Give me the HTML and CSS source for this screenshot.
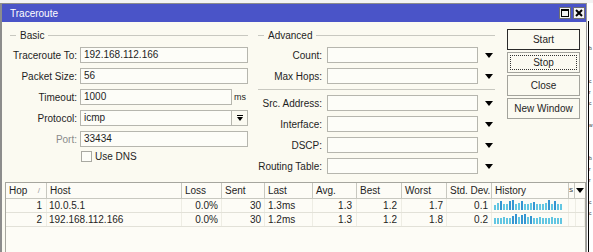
FILE: index.html
```html
<!DOCTYPE html>
<html>
<head>
<meta charset="utf-8">
<link rel="stylesheet" href="styles.css">
</head>
<body>
<div class="screen">
  <div class="topstrip"></div>
  <div class="main">
    <div class="window">
      <div class="titlebar">
        <span class="title">Traceroute</span>
        <div class="tb-btns">
          <svg class="tb-btn" width="12" height="12" viewBox="0 0 12 12"><rect x="0.5" y="0.5" width="11" height="11" fill="#f2f2f2" stroke="#6f6f6f"/><rect x="2.5" y="2.5" width="7" height="7" fill="none" stroke="#000"/><line x1="2" y1="3.5" x2="10" y2="3.5" stroke="#000"/></svg>
          <svg class="tb-btn" width="12" height="12" viewBox="0 0 12 12"><rect x="0.5" y="0.5" width="11" height="11" fill="#f2f2f2" stroke="#6f6f6f"/><path d="M3 3 L9 9 M9 3 L3 9" stroke="#000" stroke-width="2"/></svg>
        </div>
      </div>
      <div class="content">
        <div class="form">
          <div class="group basic">
            <div class="legend"><span>Basic</span></div>
            <div class="row"><span class="lbl">Traceroute To:</span><div class="inp w-full">192.168.112.166</div></div>
            <div class="row"><span class="lbl">Packet Size:</span><div class="inp w-full">56</div></div>
            <div class="row"><span class="lbl">Timeout:</span><div class="inp w-short">1000</div><span class="unit">ms</span></div>
            <div class="row"><span class="lbl">Protocol:</span><div class="inp w-short">icmp</div><div class="ddbtn"><svg width="8" height="8" viewBox="0 0 8 8"><line x1="1" y1="1.5" x2="7" y2="1.5" stroke="#000"/><polygon points="1,3 7,3 4,7" fill="#000"/></svg></div></div>
            <div class="row"><span class="lbl muted">Port:</span><div class="inp w-full">33434</div></div>
            <div class="row check-row"><span class="checkbox"></span><span>Use DNS</span></div>
          </div>
          <div class="group adv">
            <div class="legend"><span>Advanced</span></div>
            <div class="row"><span class="lbl">Count:</span><div class="inp w-adv"></div><span class="arrow"></span></div>
            <div class="row"><span class="lbl">Max Hops:</span><div class="inp w-adv"></div><span class="arrow"></span></div>
            <div class="sep"></div>
            <div class="row"><span class="lbl">Src. Address:</span><div class="inp w-adv"></div><span class="arrow"></span></div>
            <div class="row"><span class="lbl">Interface:</span><div class="inp w-adv"></div><span class="arrow"></span></div>
            <div class="row"><span class="lbl">DSCP:</span><div class="inp w-adv"></div><span class="arrow"></span></div>
            <div class="row"><span class="lbl">Routing Table:</span><div class="inp w-adv"></div><span class="arrow"></span></div>
          </div>
          <div class="buttons">
            <div class="btn default">Start</div>
            <div class="btn focus">Stop</div>
            <div class="btn">Close</div>
            <div class="btn">New Window</div>
          </div>
        </div>
        <div class="table">
          <div class="thead">
            <div class="th hop"><span>Hop</span><span class="sort">/</span></div>
            <div class="th">Host</div>
            <div class="th">Loss</div>
            <div class="th">Sent</div>
            <div class="th">Last</div>
            <div class="th">Avg.</div>
            <div class="th">Best</div>
            <div class="th">Worst</div>
            <div class="th">Std. Dev.</div>
            <div class="th">History</div>
            <div class="th narrow">S</div>
            <div class="th menu"><span class="arrow small"></span></div>
          </div>
          <div class="tr">
            <div class="td num hopn">1</div>
            <div class="td host">10.0.5.1</div>
            <div class="td num">0.0%</div>
            <div class="td num">30</div>
            <div class="td">1.3ms</div>
            <div class="td num n4">1.3</div>
            <div class="td num n4">1.2</div>
            <div class="td num">1.7</div>
            <div class="td num">0.1</div>
            <div class="td hist">
              <i style="height:5px"></i><i style="height:7px"></i><i class="hi" style="height:9px"></i><i style="height:6px"></i><i style="height:6px"></i><i class="hi" style="height:9px"></i><i class="hi" style="height:10px"></i><i style="height:6px"></i><i style="height:7px"></i><i class="hi" style="height:9px"></i><i style="height:6px"></i><i style="height:6px"></i><i style="height:7px"></i><i class="hi" style="height:8px"></i><i style="height:6px"></i><i style="height:6px"></i><i style="height:6px"></i><i style="height:7px"></i><i class="hi" style="height:10px"></i><i style="height:6px"></i><i class="hi" style="height:9px"></i><i style="height:6px"></i><i style="height:6px"></i>
            </div>
            <div class="td"></div>
            <div class="td"></div>
          </div>
          <div class="tr">
            <div class="td num hopn">2</div>
            <div class="td host">192.168.112.166</div>
            <div class="td num">0.0%</div>
            <div class="td num">30</div>
            <div class="td">1.2ms</div>
            <div class="td num n4">1.3</div>
            <div class="td num n4">1.2</div>
            <div class="td num">1.8</div>
            <div class="td num">0.2</div>
            <div class="td hist">
              <i style="height:6px"></i><i style="height:6px"></i><i style="height:6px"></i><i style="height:7px"></i><i style="height:6px"></i><i style="height:6px"></i><i class="hi" style="height:8px"></i><i class="hi" style="height:10px"></i><i style="height:7px"></i><i class="hi" style="height:9px"></i><i class="hi" style="height:10px"></i><i style="height:7px"></i><i class="hi" style="height:8px"></i><i style="height:6px"></i><i style="height:6px"></i><i style="height:7px"></i><i style="height:6px"></i><i style="height:6px"></i><i style="height:6px"></i><i style="height:7px"></i><i style="height:6px"></i><i style="height:6px"></i><i style="height:6px"></i>
            </div>
            <div class="td"></div>
            <div class="td"></div>
          </div>
        </div>
      </div>
    </div>
    <div class="side">
      <div class="side-line">
        <div class="frag"> </div><div class="frag"> </div><div class="frag">b</div><div class="frag"> </div><div class="frag"> </div><div class="frag">c</div><div class="frag">r</div><div class="frag">c</div><div class="frag"> </div><div class="frag">w</div><div class="frag"> </div><div class="frag"> </div><div class="frag">b</div><div class="frag">r</div><div class="frag">r</div><div class="frag"> </div><div class="frag">c</div><div class="frag">c</div>
      </div>
    </div>
  </div>
</div>
</body>
</html>
```
FILE: styles.css
```css
* { box-sizing: border-box; }
body {
  margin: 0;
  background: #fff;
  font-family: "Liberation Sans", Arial, sans-serif;
  font-size: 10px;
  color: #1e1e1e;
}
.screen {
  width: 593px;
  height: 252px;
  overflow: hidden;
  display: flex;
  flex-direction: column;
}
.topstrip {
  height: 3px;
  background: #f3f3f3;
  flex: none;
}
.main {
  display: flex;
  flex: 1;
  min-height: 0;
}
.window {
  width: 587px;
  flex: none;
  border-left: 2px solid #8c8c8c;
  border-top: 1px solid #8c8c8c;
  border-right: 1px solid #9a9a9a;
  background: #fbfaf1;
  display: flex;
  flex-direction: column;
}
.titlebar {
  height: 18px;
  flex: none;
  background: #4a54c8;
  color: #fff;
  display: flex;
  align-items: center;
  padding-left: 8px;
}
.title { font-size: 10px; }
.tb-btns {
  margin-left: auto;
  margin-right: 1px;
  display: flex;
  gap: 2px;
}
.tb-btn { display: block; }
.content {
  flex: 1;
  display: flex;
  flex-direction: column;
}
.form {
  display: flex;
  padding: 6px 0 0 8px;
}
.group {
  width: 239px;
  display: flex;
  flex-direction: column;
  gap: 5px;
}
.adv { margin-left: 9px; }
.legend {
  height: 14px;
  display: flex;
  align-items: center;
  gap: 4px;
  margin-right: 1px;
}
.legend::before {
  content: "";
  width: 6px;
  border-top: 1px solid #c8c8c0;
}
.legend::after {
  content: "";
  flex: 1;
  border-top: 1px solid #c8c8c0;
}
.adv .legend { margin-right: 2px; }
.row {
  display: flex;
  align-items: center;
  height: 16px;
}
.lbl {
  width: 67px;
  text-align: right;
  white-space: nowrap;
  flex: none;
}
.adv .lbl { width: 64px; }
.muted { color: #8a8a8a; }
.inp {
  height: 16px;
  border: 1px solid #b6b6ae;
  background: #fdfdf8;
  padding-left: 3px;
  line-height: 14px;
  margin-left: 3px;
  white-space: nowrap;
}
.w-full { width: 168px; }
.w-short { width: 152px; }
.w-adv { width: 151px; margin-left: 5px; }
.unit { margin-left: 2px; font-size: 9px; }
.ddbtn {
  width: 16px;
  height: 16px;
  border: 1px solid #b6b6ae;
  border-left: none;
  background: #fbfaf1;
  display: flex;
  align-items: center;
  justify-content: center;
}
.ddbtn svg { display: block; }
.arrow {
  width: 0;
  height: 0;
  border-left: 4px solid transparent;
  border-right: 4px solid transparent;
  border-top: 5px solid #000;
  margin-left: 7px;
}
.arrow.small { margin-left: 0; }
.sep {
  height: 1px;
  border-top: 1px solid #c8c8c0;
  margin-right: 2px;
}
.check-row {
  padding-left: 71px;
  gap: 3px;
  height: 13px;
  margin-top: -2px;
}
.checkbox {
  width: 11px;
  height: 11px;
  border: 1px solid #a9a9a2;
  background: #fdfdf8;
}
.buttons {
  margin-left: 10px;
  width: 73px;
  display: flex;
  flex-direction: column;
  gap: 2px;
  padding-top: 1px;
}
.btn {
  height: 21px;
  border: 1px solid #a3a39c;
  background: #fbfaf1;
  display: flex;
  align-items: center;
  justify-content: center;
  position: relative;
  color: #1e1e1e;
}
.btn.default { border-color: #2a2a2a; }
.btn.focus::after {
  content: "";
  position: absolute;
  inset: 2px;
  border: 1px dotted #333;
}
.table {
  margin: 8px 0 0 3px;
  border: 1px solid #a6a69e;
  border-bottom: none;
  background: #fdfcf6;
  flex: 1;
}
.thead, .tr {
  display: grid;
  grid-template-columns: 41px 135px 40px 43px 48px 44px 45px 45px 45px 77px 6px 10px;
}
.thead {
  height: 16px;
  border-bottom: 1px solid #c8c8c0;
}
.th {
  border-right: 1px solid #c8c8c0;
  padding-left: 3px;
  line-height: 15px;
  white-space: nowrap;
  overflow: hidden;
}
.th.hop {
  display: flex;
  justify-content: space-between;
  padding-right: 6px;
}
.sort { color: #9a9a9a; font-size: 8px; }
.th.narrow { padding-left: 0; font-size: 6px; }
.th.menu {
  border-right: none;
  padding-left: 1px;
  display: flex;
  align-items: center;
}
.tr {
  height: 14px;
  border-bottom: 1px solid #e2e1d8;
}
.td {
  padding: 0 3px;
  line-height: 13px;
  white-space: nowrap;
  overflow: hidden;
  border-right: 1px solid #eeede4;
}
.td.num { text-align: right; }
.td.n4 { padding-right: 4px; }
.td.hopn { padding-right: 4px; }
.td.host { padding-left: 2px; }
.td.hist {
  display: flex;
  align-items: flex-end;
  gap: 1px;
  padding: 0 0 2px 2px;
}
.hist i {
  display: block;
  width: 2px;
  background: #62c6e2;
  flex: none;
}
.hist i.hi { background: #3596d2; }
.side {
  flex: 1;
  background: #fff;
}
.side-line {
  margin-left: 1px;
  margin-top: 18px;
  height: 100%;
  border-left: 1px solid #000;
  padding-left: 0;
  overflow: hidden;
  font-size: 5px;
  color: #333;
}
.frag { height: 11px; line-height: 11px; }
```
